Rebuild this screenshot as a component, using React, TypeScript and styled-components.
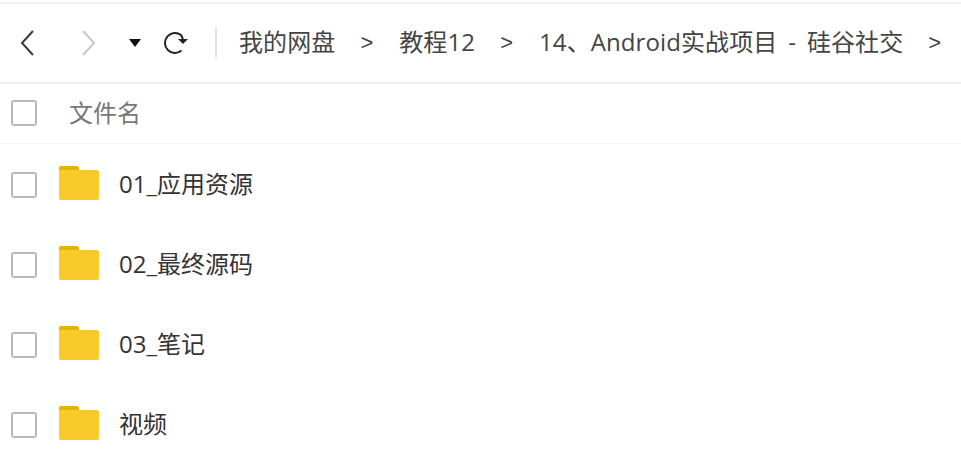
import React from 'react'
import styled, { createGlobalStyle } from 'styled-components'

const GlobalStyle = createGlobalStyle`
  html, body {
    margin: 0;
    padding: 0;
    background: #fff;
  }
  body {
    font-family: "Open Sans", "Noto Sans CJK SC", sans-serif;
    overflow: hidden;
  }
`

const Page = styled.div`
  width: 961px;
  height: 465px;
  overflow: hidden;
  display: flex;
  flex-direction: column;
  padding-top: 2px;
  box-sizing: border-box;
`

const TopLine = styled.div`
  height: 2px;
  background: #f1f1f1;
  flex: none;
`

const Toolbar = styled.div`
  height: 78px;
  flex: none;
  display: flex;
  align-items: center;
  border-bottom: 2px solid #f0f0f0;
  padding-left: 20px;
  white-space: nowrap;
`

const NavIcon = styled.svg<{ $gap: number }>`
  flex: none;
  margin-right: ${p => p.$gap}px;
`

const Divider = styled.div`
  width: 2px;
  height: 32px;
  background: #e4e4e4;
  margin-right: 22px;
  flex: none;
`

const Crumb = styled.span`
  font-size: 24px;
  color: #444;
  letter-spacing: 0.1px;
  word-spacing: 4.5px;
  padding-bottom: 5px;
`

const Sep = styled.span`
  font-family: "Liberation Sans", sans-serif;
  font-size: 22px;
  color: #444;
  margin: 0 26px 0 25px;
`

const HeadRow = styled.div`
  height: 60px;
  flex: none;
  display: flex;
  align-items: center;
  padding: 0 0 2px 11px;
  border-bottom: 1px solid #f5f5f5;
  box-sizing: border-box;
`

const Check = styled.div`
  width: 22px;
  height: 22px;
  border: 2px solid #b9b9b9;
  border-radius: 3px;
  flex: none;
`

const HeadLabel = styled.span`
  margin-left: 32px;
  font-size: 24px;
  color: #777;
  padding-bottom: 3px;
`

const RowList = styled.div`
  padding-top: 1px;
  display: flex;
  flex-direction: column;
`

const Row = styled.div`
  height: 80px;
  flex: none;
  display: flex;
  align-items: center;
  padding-left: 11px;
`

const FolderIcon = styled.svg`
  margin: 0 0 4px 22px;
  flex: none;
`

const RowName = styled.span`
  margin-left: 20px;
  font-size: 24px;
  color: #333;
  padding-bottom: 5px;
`

const Folder = () => (
  <FolderIcon width="40" height="34" viewBox="0 0 40 34">
    <path d="M0 2a2 2 0 0 1 2-2h16a2 2 0 0 1 2 2v3H0z" fill="#e8b200" />
    <path d="M0 4h38a2 2 0 0 1 2 2v26a2 2 0 0 1-2 2H2a2 2 0 0 1-2-2z" fill="#f8cb2a" />
  </FolderIcon>
)

const crumbs = ['我的网盘', '教程12', '14、Android实战项目 - 硅谷社交']
const rows = ['01_应用资源', '02_最终源码', '03_笔记', '视频']

export default function App() {
  return (
    <Page>
      <GlobalStyle />
      <TopLine />
      <Toolbar>
        <NavIcon $gap={48} width="14" height="26" viewBox="0 0 14 26">
          <path d="M13 1 2 13l11 12" fill="none" stroke="#3a3a3a" strokeWidth="2" />
        </NavIcon>
        <NavIcon $gap={33} width="14" height="26" viewBox="0 0 14 26">
          <path d="M1 1l11 12L1 25" fill="none" stroke="#c8c8c8" strokeWidth="2" />
        </NavIcon>
        <NavIcon $gap={22} width="12" height="10" viewBox="0 0 12 10">
          <path d="M0 1h12L6 9z" fill="#111" />
        </NavIcon>
        <NavIcon $gap={26} width="26" height="24" viewBox="0 0 26 24">
          <path d="M18.5 19.5A10 10 0 1 1 18 4l2 4" fill="none" stroke="#222" strokeWidth="2" />
          <path d="M15 8h10l-5 5z" fill="#222" />
        </NavIcon>
        <Divider />
        {crumbs.map(c => (
          <React.Fragment key={c}>
            <Crumb>{c}</Crumb>
            <Sep>&gt;</Sep>
          </React.Fragment>
        ))}
      </Toolbar>
      <HeadRow>
        <Check />
        <HeadLabel>文件名</HeadLabel>
      </HeadRow>
      <RowList>
        {rows.map(r => (
          <Row key={r}>
            <Check />
            <Folder />
            <RowName>{r}</RowName>
          </Row>
        ))}
      </RowList>
    </Page>
  )
}
